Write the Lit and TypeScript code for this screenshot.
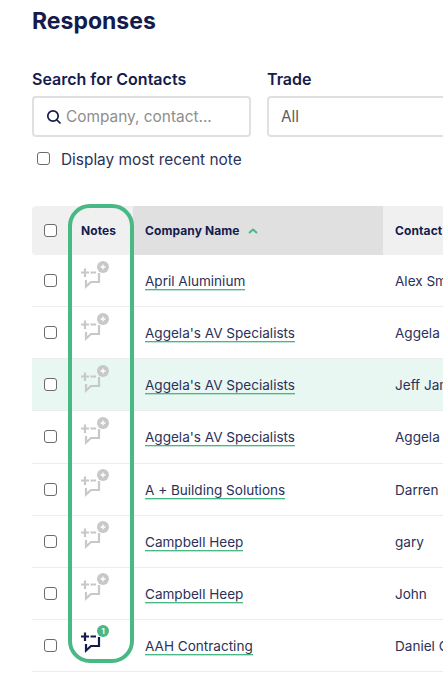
import { LitElement, html, css, svg } from "lit";
import { customElement } from "lit/decorators.js";

const rows = [
  ["April Aluminium", "Alex Smith", false, false],
  ["Aggela's AV Specialists", "Aggela", false, false],
  ["Aggela's AV Specialists", "Jeff James", true, false],
  ["Aggela's AV Specialists", "Aggela", false, false],
  ["A + Building Solutions", "Darren", false, false],
  ["Campbell Heep", "gary", false, false],
  ["Campbell Heep", "John", false, false],
  ["AAH Contracting", "Daniel Cooper", false, true],
] as const;

const noteIcon = (active: boolean) => {
  const c = active ? "#141b4d" : "#c8c8c8";
  const badge = active ? "#48b884" : "#c8c8c8";
  return html`<svg class="note" width="30" height="30" viewBox="0 0 30 30" fill="none">
    ${svg`<path d="M1 12.5h8M5 8.5v8.5" stroke=${c} stroke-width="2.2"/>
    <path d="M10.5 12.5h5.5M19 13v9H11l-5 4.5v-6.5" stroke=${c} stroke-width="2.2"/>
    <circle cx="23" cy="7" r="6" fill=${badge}/>`}
    ${active
      ? svg`<text x="23" y="9.7" font-size="7.5" font-weight="700" text-anchor="middle" fill="#fff" font-family="Inter, sans-serif">1</text>`
      : svg`<path d="M23 4.5v5M20.5 7h5" stroke="#fff" stroke-width="1.3"/>`}
  </svg>`;
};

@customElement("app-root")
export class AppRoot extends LitElement {
  static styles = css`
    :host {
      display: block;
      width: 443px;
      height: 673px;
      overflow: hidden;
      position: relative;
      background: #fff;
      font-family: Inter, "Liberation Sans", sans-serif;
      color: #141b4d;
    }
    .page {
      padding: 8px 0 0 32px;
      width: 700px;
      box-sizing: border-box;
    }
    h1 {
      margin: 0;
      font-size: 23px;
      line-height: 26px;
      font-weight: 700;
    }
    .filters {
      display: flex;
      gap: 16px;
      margin-top: 36px;
    }
    .label {
      font-size: 16px;
      line-height: 18px;
      font-weight: 600;
      margin-bottom: 8px;
    }
    .field {
      box-sizing: border-box;
      height: 41px;
      border: 2px solid #e0e0e0;
      border-radius: 4px;
      display: flex;
      align-items: center;
      font-size: 15.4px;
      background: #fff;
    }
    .search { width: 219px; padding-left: 12px; gap: 4px; color: #8e8e8e; }
    .trade { width: 260px; padding-left: 12px; color: #5c5c5c; }
    .recent {
      display: flex;
      align-items: center;
      gap: 11px;
      margin: 12px 0 0 5px;
      font-size: 15.4px;
      line-height: 22px;
      color: #2b3158;
    }
    .cb {
      box-sizing: border-box;
      width: 13px;
      height: 13px;
      border: 1px solid #6b6b6b;
      border-radius: 3px;
      background: #fff;
      flex: none;
    }
    .recent .cb { position: relative; top: -2px; }
    .table { margin-top: 35px; }
    .tr {
      display: grid;
      grid-template-columns: 38px 63px 250px 1fr;
      height: 52.14px;
      box-sizing: border-box;
      border-bottom: 1px solid #ececec;
      align-items: center;
      font-size: 13.55px;
      color: #2b3158;
    }
    .tr.hl { background: #e8f7f2; }
    .tr.head {
      height: 49px;
      border-bottom: 0;
      background: #f0f0f0;
      border-radius: 4px 0 0 4px;
      font-size: 12px;
      font-weight: 700;
      color: #141b4d;
      letter-spacing: 0.1px;
    }
    .cbc { display: flex; justify-content: center; padding-right: 1px; }
    .notes { display: flex; padding-left: 10px; }
    .head .notes { padding-left: 11px; }
    .note { display: block; margin-bottom: 12px; }
    .sort {
      background: #e0e0e0;
      align-self: stretch;
      display: flex;
      align-items: center;
      gap: 8px;
      padding-left: 12px;
    }
    .company { padding: 2px 0 0 12px; }
    .company a {
      color: #2b3158;
      text-decoration: none;
      border-bottom: 1px solid #48b884;
      box-shadow: 0 1px 0 rgba(72, 184, 132, 0.35);
      display: inline-block;
      line-height: 15px;
    }
    .contact { padding-left: 12px; white-space: nowrap; }
    .tr:not(.head) .contact { padding-top: 1px; }
    .ring {
      position: absolute;
      left: 67.5px;
      top: 204px;
      width: 66px;
      height: 459px;
      box-sizing: border-box;
      border: 4px solid #48b884;
      border-radius: 22px;
      pointer-events: none;
    }
  `;

  render() {
    return html`
      <div class="page">
        <h1>Responses</h1>
        <div class="filters">
          <div>
            <div class="label">Search for Contacts</div>
            <div class="field search">
              <svg width="16" height="16" viewBox="0 0 16 16" fill="none">
                <circle cx="7" cy="7" r="5.2" stroke="#141b4d" stroke-width="1.7"/>
                <path d="M10.8 10.8L14.5 14.5" stroke="#141b4d" stroke-width="1.7"/>
              </svg>
              <span>Company, contact...</span>
            </div>
          </div>
          <div>
            <div class="label">Trade</div>
            <div class="field trade">All</div>
          </div>
        </div>
        <div class="recent"><span class="cb"></span><span>Display most recent note</span></div>
        <div class="table">
          <div class="tr head">
            <div class="cbc"><span class="cb"></span></div>
            <div class="notes">Notes</div>
            <div class="sort">
              <span>Company Name</span>
              <svg width="10" height="6" viewBox="0 0 10 6" fill="none">
                <path d="M1 5l4-3.5L9 5" stroke="#48b884" stroke-width="2"/>
              </svg>
            </div>
            <div class="contact">Contact</div>
          </div>
          ${rows.map(
            ([company, contact, hl, active]) => html`
              <div class="tr ${hl ? "hl" : ""}">
                <div class="cbc"><span class="cb"></span></div>
                <div class="notes">${noteIcon(active)}</div>
                <div class="company"><a>${company}</a></div>
                <div class="contact">${contact}</div>
              </div>
            `
          )}
        </div>
      </div>
      <div class="ring"></div>
    `;
  }
}
